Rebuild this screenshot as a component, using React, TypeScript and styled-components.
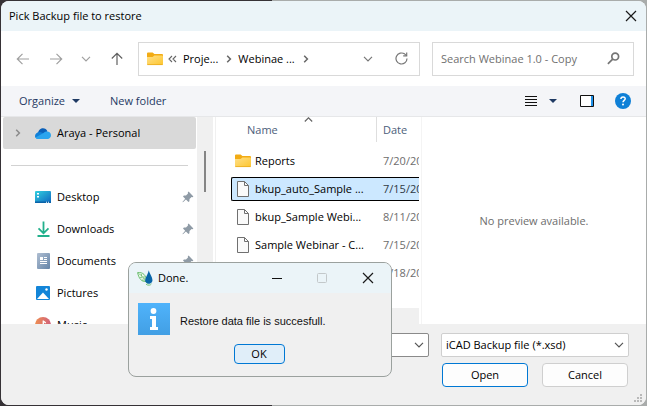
import React, { useState } from "react";
import styled, { createGlobalStyle } from "styled-components";

const GlobalStyle = createGlobalStyle`
  *, *::before, *::after { box-sizing: border-box; }
  html, body { margin: 0; height: 100%; }
  body, button, input, select {
    font-family: "Open Sans", "Noto Sans", sans-serif;
    font-size: 11px;
    line-height: 16px;
    color: #000;
  }
  button { padding: 0; border: 0; background: none; }
  svg { display: block; flex: none; }
`;

const Desktop = styled.div`
  position: relative;
  height: 100vh;
  padding: 1px;
  overflow: hidden;
  background: linear-gradient(to right, #363236 42%, #a9acab 42%);
`;

const Window = styled.main`
  display: flex;
  flex-direction: column;
  height: 100%;
  overflow: hidden;
  border-radius: 8px;
  background: #fff;
`;

const TitleBar = styled.header`
  display: flex;
  align-items: center;
  justify-content: space-between;
  flex: none;
  height: 30px;
  padding: 0 9px 0 8px;
  background: #ebf4f8;
`;

const Title = styled.h1`
  margin: 0;
  font-size: 11px;
  font-weight: 400;
  white-space: nowrap;
`;

const IconButton = styled.button<{ $color?: string }>`
  display: grid;
  place-items: center;
  flex: none;
  color: ${(p) => p.$color ?? "#1a1a1a"};
`;

const NavBar = styled.nav`
  display: grid;
  grid-template-columns: 108px minmax(0, 308fr) minmax(0, 202fr);
  align-items: center;
  flex: none;
  height: 55px;
  padding: 0 12px 0 15px;
`;

const NavButtons = styled.div`
  display: flex;
  align-items: center;
  justify-content: space-between;
`;

const AddressBar = styled.div`
  display: flex;
  align-items: center;
  height: 34px;
  margin: 0 12px 0 14px;
  padding: 0 11px 0 8px;
  border: 1px solid #d9d9d9;
  color: #666;
`;

const Crumb = styled.button`
  margin: 0 8px 0 6px;
  white-space: nowrap;
`;

const MoreFolders = styled(IconButton)`
  margin-left: 5px;
`;

const AddressTools = styled.div`
  display: flex;
  align-items: center;
  gap: 22px;
  margin-left: auto;
`;

const SearchBox = styled.label`
  display: flex;
  align-items: center;
  height: 34px;
  padding: 0 13px 0 8px;
  border: 1px solid #d9d9d9;
`;

const SearchInput = styled.input`
  flex: 1;
  min-width: 0;
  padding: 0;
  border: 0;
  outline: 0;
  background: none;
  &::placeholder { color: #707070; opacity: 1; }
`;

const CommandBar = styled.div`
  display: flex;
  align-items: center;
  flex: none;
  height: 31px;
  padding: 0 15px 0 18px;
  border-bottom: 1px solid #e6e7e9;
  background: #f4f5f8;
`;

const CommandButton = styled.button`
  display: flex;
  align-items: center;
  gap: 7px;
  margin-right: 30px;
  color: #1f3a63;
  white-space: nowrap;
`;

const CommandTools = styled.div`
  display: flex;
  align-items: center;
  margin-left: auto;
`;

const ViewTools = styled.div`
  display: flex;
  align-items: center;
  gap: 12px;
  margin-right: 23px;
`;

const PaneTools = styled.div`
  display: flex;
  align-items: center;
  gap: 21px;
`;

const Body = styled.div`
  display: grid;
  grid-template-columns: 212px 208px minmax(0, 1fr);
  grid-template-rows: minmax(0, 1fr);
  flex: 1;
  min-height: 0;
`;

const Sidebar = styled.aside`
  display: flex;
  overflow: hidden;
`;

const Tree = styled.div`
  flex: 1;
  min-width: 0;
  padding: 0 1px 0 2px;
`;

const TreeItem = styled.button<{ $selected?: boolean }>`
  display: grid;
  grid-template-columns: 24px 16px 1fr 12px;
  column-gap: 6px;
  align-items: center;
  justify-items: start;
  width: 100%;
  height: 32px;
  padding: 0 2px;
  border-radius: 2px;
  background: ${(p) => (p.$selected ? "#d9d9d9" : "transparent")};
`;

const TreeChevron = styled.span`
  display: grid;
  width: 24px;
  padding-left: 10px;
  color: #8a8a8a;
`;

const IconSlot = styled.span`
  display: grid;
  place-items: center;
  width: 16px;
`;

const TreeDivider = styled.hr`
  height: 1px;
  margin: 16px 8px 15px;
  border: 0;
  background: #d2d2d2;
`;

const ScrollTrack = styled.div`
  flex: none;
  width: 16px;
  padding: 34px 7px 0;
  background: #f0f0f0;
`;

const ScrollThumb = styled.div`
  width: 2px;
  height: 41px;
  background: #858585;
`;

const FilePane = styled.section`
  display: flex;
  flex-direction: column;
  min-width: 0;
  margin-left: 2px;
  border-left: 1px solid #f0f0f0;
`;

const FileTableClip = styled.div`
  flex: 1;
  min-height: 0;
  margin-right: 2px;
  overflow: hidden;
`;

const FileTable = styled.table`
  width: 100%;
  table-layout: fixed;
  border-spacing: 0;
`;

const HeadCell = styled.th<{ $width?: number }>`
  position: relative;
  width: ${(p) => (p.$width ? `${p.$width}px` : "auto")};
  height: 25px;
  padding: ${(p) => (p.$width ? "0 0 0 31px" : "0 0 0 6px")};
  border-right: ${(p) => (p.$width ? "1px solid #dedede" : "0")};
  color: #4c607a;
  font-weight: 400;
  text-align: left;
`;

const SortMark = styled.span`
  position: absolute;
  top: 0;
  left: 88px;
  color: #666;
`;

const HeadSpacer = styled.tr`
  height: 5px;
`;

const Row = styled.tr`
  height: 28px;
`;

const Cell = styled.td`
  padding: 2px 0;
`;

const FileName = styled.div<{ $selected?: boolean }>`
  display: grid;
  grid-template-columns: 16px minmax(0, 1fr);
  column-gap: 4px;
  align-items: center;
  justify-items: center;
  height: 24px;
  margin-left: 15px;
  padding-left: ${(p) => (p.$selected ? 3 : 4)}px;
  border: solid ${(p) => (p.$selected ? "#000" : "transparent")};
  border-width: ${(p) => (p.$selected ? "1px 0 1px 1px" : "0")};
  border-radius: 2px 0 0 2px;
  background: ${(p) => (p.$selected ? "#cce8ff" : "transparent")};
`;

const FileLabel = styled.span`
  width: 100%;
  overflow: hidden;
  white-space: nowrap;
`;

const FileDate = styled.div<{ $selected?: boolean }>`
  display: flex;
  align-items: center;
  height: 24px;
  padding-left: 6px;
  overflow: hidden;
  border: solid ${(p) => (p.$selected ? "#000" : "transparent")};
  border-width: 1px 0;
  background: ${(p) => (p.$selected ? "#cce8ff" : "transparent")};
  color: ${(p) => (p.$selected ? "#303a44" : "#6d6d6d")};
  white-space: nowrap;
`;

const HorizontalTrack = styled.div`
  flex: none;
  height: 16px;
  margin-right: 2px;
  background: #f0f0f0;
`;

const Preview = styled.section`
  display: grid;
  place-items: center;
  border-left: 1px solid #f4f4f4;
  color: #6d6d6d;
`;

const Footer = styled.footer`
  display: flex;
  flex-direction: column;
  align-items: flex-end;
  flex: none;
  gap: 6px;
  padding: 9px 17px 18px;
  background: #f0f0f0;
`;

const FieldRow = styled.div`
  display: flex;
  gap: 12px;
  width: 100%;
  padding-left: 110px;
`;

const Field = styled.div`
  display: grid;
  grid-template-columns: minmax(0, 1fr) 10px;
  align-items: center;
  height: 24px;
  padding-right: 4px;
  border: 1px solid #8a8a8a;
  border-radius: 2px;
  background: #fff;
  color: #555;
`;

const NameField = styled(Field)`
  flex: 1;
`;

const TypeField = styled(Field)`
  width: 188px;
  border-color: #cfcfcf;
`;

const NameInput = styled.input`
  min-width: 0;
  padding: 0 4px;
  border: 0;
  outline: 0;
  background: none;
`;

const TypeSelect = styled.select`
  grid-area: 1 / 1 / 2 / 3;
  width: 100%;
  height: 22px;
  padding: 0 14px 0 4px;
  border: 0;
  outline: 0;
  appearance: none;
  background: none;
`;

const TypeChevron = styled.span`
  grid-area: 1 / 2;
  pointer-events: none;
`;

const Actions = styled.div`
  display: flex;
  gap: 14px;
  padding-right: 1px;
`;

const PushButton = styled.button<{ $primary?: boolean; $small?: boolean }>`
  width: ${(p) => (p.$small ? 51 : 86)}px;
  height: ${(p) => (p.$small ? 20 : 24)}px;
  border: 1px solid ${(p) => (p.$primary ? "#0078d4" : "#cfcfcf")};
  border-radius: 4px;
  background: ${(p) => (p.$small ? "#e0eef9" : "#fdfdfd")};
`;

const Grip = styled.div`
  position: absolute;
  right: 4px;
  bottom: 3px;
`;

const Dialog = styled.section`
  position: absolute;
  left: 128px;
  top: 262px;
  width: 264px;
  overflow: hidden;
  border: 1px solid #9ba19e;
  border-radius: 8px;
  background: #f0f0f0;
`;

const DialogTitleBar = styled.header`
  display: flex;
  align-items: center;
  gap: 5px;
  height: 30px;
  padding: 0 17px 0 8px;
  background: #ebf4f8;
`;

const DialogTools = styled.div`
  display: flex;
  align-items: center;
  gap: 35px;
  margin-left: auto;
`;

const DialogMessage = styled.div`
  display: flex;
  align-items: center;
  gap: 10px;
  padding: 10px 9px 0;
`;

const MessageText = styled.p`
  margin: 0;
  padding-top: 4px;
  font: 11px/16px "Liberation Sans", Arial, sans-serif;
  color: #111;
`;

const DialogActions = styled.div`
  display: flex;
  justify-content: center;
  padding: 9px 2px 12px 0;
`;

const Arrow = ({ turn = 0 }: { turn?: number }) => (
  <svg width="14" height="14" viewBox="0 0 14 14" fill="none" stroke="currentColor" strokeWidth="1.2">
    <g transform={`rotate(${turn} 7 7)`}>
      <path d="M13 7H1.5M6.500 1.800 1.300 7l5.200 5.200" />
    </g>
  </svg>
);

const ChevronDown = () => (
  <svg width="10" height="6" viewBox="0 0 10 6" fill="none" stroke="currentColor" strokeWidth="1.2">
    <path d="m1 .8 4 4 4-4" />
  </svg>
);

const ChevronRight = ({ height = 8 }: { height?: number }) => (
  <svg width="6" height={height} viewBox="0 0 6 8" fill="none" stroke="currentColor" strokeWidth="1.5">
    <path d="m1.200.8 3.200 3.200-3.200 3.200" />
  </svg>
);

const Laquo = () => (
  <svg width="9" height="8" viewBox="0 0 9 8" fill="none" stroke="currentColor" strokeWidth="1.1">
    <path d="M4 1 1 4l3 3M8 1 5 4l3 3" />
  </svg>
);

const Cross = () => (
  <svg width="12" height="12" viewBox="0 0 12 12" fill="none" stroke="currentColor" strokeWidth="1.2">
    <path d="m1 1 10 10M11 1 1 11" />
  </svg>
);

const Caret = () => (
  <svg width="8" height="4" viewBox="0 0 8 4" fill="#1f3a63">
    <path d="M0 0h8L4 4z" />
  </svg>
);

const SortIcon = () => (
  <svg width="9" height="5" viewBox="0 0 9 5" fill="none" stroke="currentColor" strokeWidth="1.2">
    <path d="M.8 4.500 4.500.8l3.700 3.700" />
  </svg>
);

const FolderIcon = () => (
  <svg width="16" height="14" viewBox="0 0 16 14">
    <defs>
      <linearGradient id="folder" x1="0" y1="0" x2="1" y2="1">
        <stop offset="0" stopColor="#ffe08a" />
        <stop offset="1" stopColor="#fdc62f" />
      </linearGradient>
    </defs>
    <path d="M0 1.500Q0 .5 1 .5h4.600L7.400 2H15q1 0 1 1v7H0z" fill="#f2ab14" />
    <path d="M0 5h5.600l1.800-1.600H15q1 0 1 1V12q0 1-1 1H1q-1 0-1-1z" fill="url(#folder)" />
    <path d="M.3 12.600h15.400" stroke="#e9a91a" strokeWidth=".8" />
  </svg>
);

const PageIcon = () => (
  <svg width="12" height="16" viewBox="0 0 12 16" fill="#fafafa" stroke="#707070">
    <path d="M.5.5h7l4 4v11H.5z" />
    <path d="M7.500.5v4h4" fill="none" />
  </svg>
);

const RefreshIcon = () => (
  <svg width="13" height="13" viewBox="0 0 13 13" fill="none" stroke="#777" strokeWidth="1.2">
    <path d="M12 6.500A5.500 5.500 0 1 1 9.800 2.100L11.600 3.600" />
    <path d="M11.700.4v3.400H8.200" />
  </svg>
);

const SearchIcon = () => (
  <svg width="13" height="13" viewBox="0 0 13 13" fill="none" stroke="#757575" strokeWidth="1.7">
    <circle cx="8.2" cy="4.6" r="3.4" />
    <path d="M5.700 7.100.9 11.900" />
  </svg>
);

const ListIcon = () => (
  <svg width="12" height="11" viewBox="0 0 12 11" fill="#111">
    <path d="M0 0h12v1H0zM0 3h12v1H0zM0 6h12v1H0zM0 9h12v1H0z" />
  </svg>
);

const PaneIcon = () => (
  <svg width="14" height="12" viewBox="0 0 14 12">
    <path d="M.5.5h13v11H.5z" fill="#fff" stroke="#111" />
    <path d="M11 1h2v10h-2z" fill="#1e90e8" />
  </svg>
);

const HelpIcon = () => (
  <svg width="16" height="16" viewBox="0 0 16 16">
    <circle cx="8" cy="8" r="8" fill="#0f80d7" />
    <path d="M5.900 6.100C5.900 3.200 10.200 3.300 10.200 5.800 10.200 7.400 8 7.400 8 9.300" fill="none" stroke="#fff" strokeWidth="1.5" />
    <circle cx="8" cy="11.6" r="1" fill="#fff" />
  </svg>
);

const PinIcon = () => (
  <svg width="12" height="12" viewBox="0 0 12 12" fill="#8f9ba6">
    <path d="M6.600.6 11.400 5.400 10.600 6.200 9.600 6 7.500 8.100 7.400 10.200 6.500 11 3.900 8.400 1 11.300.4 10.900 3.200 7.700 1 5.500 1.900 4.600 4 4.500 6 2.400 5.800 1.400z" />
  </svg>
);

const CloudIcon = () => (
  <svg width="16" height="11" viewBox="0 0 16 11">
    <path d="M3 7C2.600 2.700 5.200.3 8 .3c2 0 3.700 1.200 4.400 3L9 8z" fill="#0a5fb8" />
    <path d="M5 4c-3 0-5 1.700-5 4 0 1.300.8 2.400 2 2.800L11 6z" fill="#1280d8" />
    <path d="M12 3.600c2.300 0 4 1.700 4 3.700S14.500 11 12.500 11H3.200C1.800 11 .8 10.300.4 9.500L8.200 5.200c1-1 2.300-1.600 3.800-1.600z" fill="#2aa4ee" />
  </svg>
);

const DesktopIcon = () => (
  <svg width="16" height="12" viewBox="0 0 16 12">
    <defs>
      <linearGradient id="desk" x1="0" y1="0" x2="1" y2="1">
        <stop offset="0" stopColor="#31d0df" />
        <stop offset="1" stopColor="#0e65c0" />
      </linearGradient>
    </defs>
    <rect width="16" height="12" rx="1" fill="url(#desk)" />
    <path d="M2 2h2v1.500H2zM2 5h2v1.500H2z" fill="#fff" />
    <path d="M0 10.500h16V12H0z" fill="#0a63a8" />
    <path d="M11 10.700h1v1h-1zM13 10.700h1v1h-1z" fill="#fff" />
  </svg>
);

const DownloadIcon = () => (
  <svg width="13" height="16" viewBox="0 0 13 16" fill="none" stroke="#22b08c" strokeWidth="1.8">
    <path d="M6.500.5v11.500M1.500 7.300l5 5 5-5M.5 15h12" />
  </svg>
);

const DocumentIcon = () => (
  <svg width="13" height="16" viewBox="0 0 13 16">
    <defs>
      <linearGradient id="doc" x1="0" y1="0" x2="1" y2="1">
        <stop offset="0" stopColor="#b0bfd2" />
        <stop offset="1" stopColor="#6484a8" />
      </linearGradient>
    </defs>
    <rect width="13" height="16" rx="1" fill="url(#doc)" />
    <path d="M3 4h3v3H3zM7 4h3v1H7zM7 6h3v1H7zM3 8h7v1H3zM3 10h7v1H3z" fill="#fff" />
  </svg>
);

const PicturesIcon = () => (
  <svg width="14" height="14" viewBox="0 0 14 14">
    <rect width="14" height="14" rx="1" fill="#1385d8" />
    <path d="m1 13 6-6.500 6 6.500z" fill="#fff" />
    <circle cx="10.5" cy="3.5" r="1.2" fill="#fff" />
  </svg>
);

const MusicIcon = () => (
  <svg width="16" height="16" viewBox="0 0 16 16">
    <defs>
      <linearGradient id="music" x1="0" y1="0" x2="1" y2="0">
        <stop offset="0" stopColor="#ee8f52" />
        <stop offset="1" stopColor="#d0607c" />
      </linearGradient>
    </defs>
    <circle cx="8" cy="8" r="8" fill="url(#music)" />
    <path d="M8.300 3.500v7M8.300 4l2.500 2" stroke="#fff" strokeWidth="1.4" fill="none" />
    <circle cx="7" cy="10.5" r="1.8" fill="#fff" />
  </svg>
);

const LeafIcon = () => (
  <svg width="16" height="16" viewBox="0 0 16 16">
    <path d="M.6 2.600C6 2 9.200 5 9.500 11.500 4.600 12 2 9 .6 2.600z" fill="#eef8ee" stroke="#5cb860" strokeWidth=".9" />
    <path d="M1.500 3.500C5 5.500 7.500 8.500 9 12l2 2.300M4.500 4v2.500M7 6v3M3 7.500l2.500.2M5 10l2.800.2" fill="none" stroke="#5cb860" strokeWidth=".7" />
    <path d="M11.700.2c.8 3.600 3.800 6.500 3.800 10a3.800 3.800 0 0 1-7.200 1.400C7.500 8 11.200 4.500 11.700.2z" fill="#0865a8" />
    <path d="M9 14.200c2 1.600 4.500 1.200 5.500-.4" fill="none" stroke="#5cb860" strokeWidth=".8" />
  </svg>
);

const InfoIcon = () => (
  <svg width="32" height="32" viewBox="0 0 32 32">
    <defs>
      <linearGradient id="info" x1="0" y1="0" x2="0" y2="1">
        <stop offset="0" stopColor="#4fb3fb" />
        <stop offset="1" stopColor="#429fe4" />
      </linearGradient>
    </defs>
    <rect width="32" height="32" fill="url(#info)" />
    <circle cx="15.5" cy="8" r="2.9" fill="#fff" />
    <path d="M12 13h6v11h2v3h-8v-3h2v-8h-2z" fill="#fff" />
  </svg>
);

const MinimizeIcon = () => (
  <svg width="10" height="10" viewBox="0 0 10 10">
    <path d="M0 5h10v1H0z" fill="#111" />
  </svg>
);

const MaximizeIcon = () => (
  <svg width="10" height="10" viewBox="0 0 10 10">
    <rect x=".5" y=".5" width="9" height="9" rx="1" fill="none" stroke="#c3c8ca" />
  </svg>
);

const places = [
  { name: "Desktop", icon: <DesktopIcon /> },
  { name: "Downloads", icon: <DownloadIcon /> },
  { name: "Documents", icon: <DocumentIcon /> },
  { name: "Pictures", icon: <PicturesIcon /> },
  { name: "Music", icon: <MusicIcon /> },
];

const files = [
  { name: "Reports", date: "7/20/20", folder: true },
  { name: "bkup_auto_Sample ...", date: "7/15/20" },
  { name: "bkup_Sample Webi...", date: "8/11/20" },
  { name: "Sample Webinar - C...", date: "7/15/20" },
  { name: "Sample", date: "7/18/20" },
];

export default function App() {
  const [selected, setSelected] = useState(1);
  return (
    <>
      <GlobalStyle />
      <Desktop>
        <Window>
          <TitleBar>
            <Title>Pick Backup file to restore</Title>
            <IconButton aria-label="Close"><Cross /></IconButton>
          </TitleBar>
          <NavBar>
            <NavButtons>
              <IconButton aria-label="Back" $color="#a0a0a0"><Arrow /></IconButton>
              <IconButton aria-label="Forward" $color="#a0a0a0"><Arrow turn={180} /></IconButton>
              <IconButton aria-label="Recent locations" $color="#a0a0a0"><ChevronDown /></IconButton>
              <IconButton aria-label="Up" $color="#606060"><Arrow turn={90} /></IconButton>
            </NavButtons>
            <AddressBar>
              <FolderIcon />
              <MoreFolders aria-label="More folders" $color="#666"><Laquo /></MoreFolders>
              <Crumb>Proje...</Crumb>
              <ChevronRight />
              <Crumb>Webinae ...</Crumb>
              <ChevronRight />
              <AddressTools>
                <IconButton aria-label="Previous locations" $color="#777"><ChevronDown /></IconButton>
                <IconButton aria-label="Refresh"><RefreshIcon /></IconButton>
              </AddressTools>
            </AddressBar>
            <SearchBox>
              <SearchInput aria-label="Search" placeholder="Search Webinae 1.0 - Copy" />
              <SearchIcon />
            </SearchBox>
          </NavBar>
          <CommandBar>
            <CommandButton>Organize <Caret /></CommandButton>
            <CommandButton>New folder</CommandButton>
            <CommandTools>
              <ViewTools>
                <IconButton aria-label="Change view"><ListIcon /></IconButton>
                <IconButton aria-label="More views"><Caret /></IconButton>
              </ViewTools>
              <PaneTools>
                <IconButton aria-label="Preview pane"><PaneIcon /></IconButton>
                <IconButton aria-label="Help"><HelpIcon /></IconButton>
              </PaneTools>
            </CommandTools>
          </CommandBar>
          <Body>
            <Sidebar>
              <Tree>
                <TreeItem $selected>
                  <TreeChevron><ChevronRight height={10} /></TreeChevron>
                  <CloudIcon />
                  Araya - Personal
                </TreeItem>
                <TreeDivider />
                {places.map((place) => (
                  <TreeItem key={place.name}>
                    <TreeChevron />
                    <IconSlot>{place.icon}</IconSlot>
                    {place.name}
                    <PinIcon />
                  </TreeItem>
                ))}
              </Tree>
              <ScrollTrack><ScrollThumb /></ScrollTrack>
            </Sidebar>
            <FilePane>
              <FileTableClip>
                <FileTable>
                  <thead>
                    <tr>
                      <HeadCell $width={161}>Name<SortMark><SortIcon /></SortMark></HeadCell>
                      <HeadCell>Date</HeadCell>
                    </tr>
                  </thead>
                  <tbody>
                    <HeadSpacer />
                    {files.map((file, i) => (
                      <Row key={file.name} onClick={() => setSelected(i)}>
                        <Cell>
                          <FileName $selected={i === selected}>
                            {file.folder ? <FolderIcon /> : <PageIcon />}
                            <FileLabel>{file.name}</FileLabel>
                          </FileName>
                        </Cell>
                        <Cell>
                          <FileDate $selected={i === selected}>{file.date}</FileDate>
                        </Cell>
                      </Row>
                    ))}
                  </tbody>
                </FileTable>
              </FileTableClip>
              <HorizontalTrack />
            </FilePane>
            <Preview>No preview available.</Preview>
          </Body>
          <Footer>
            <FieldRow>
              <NameField>
                <NameInput aria-label="File name" />
                <ChevronDown />
              </NameField>
              <TypeField>
                <TypeSelect aria-label="File type">
                  <option>iCAD Backup file (*.xsd)</option>
                </TypeSelect>
                <TypeChevron><ChevronDown /></TypeChevron>
              </TypeField>
            </FieldRow>
            <Actions>
              <PushButton $primary>Open</PushButton>
              <PushButton>Cancel</PushButton>
            </Actions>
          </Footer>
        </Window>
        <Grip>
          <svg width="9" height="9" viewBox="0 0 9 9" fill="#b9b9b9">
            <path d="M6 0h2v2H6zM3 3h2v2H3zM6 3h2v2H6zM0 6h2v2H0zM3 6h2v2H3zM6 6h2v2H6z" />
          </svg>
        </Grip>
        <Dialog role="dialog" aria-label="Done.">
          <DialogTitleBar>
            <LeafIcon />
            <Title as="h2">Done.</Title>
            <DialogTools>
              <IconButton aria-label="Minimize"><MinimizeIcon /></IconButton>
              <IconButton aria-label="Maximize" disabled><MaximizeIcon /></IconButton>
              <IconButton aria-label="Close message"><Cross /></IconButton>
            </DialogTools>
          </DialogTitleBar>
          <DialogMessage>
            <InfoIcon />
            <MessageText>Restore data file is succesfull.</MessageText>
          </DialogMessage>
          <DialogActions>
            <PushButton $primary $small>OK</PushButton>
          </DialogActions>
        </Dialog>
      </Desktop>
    </>
  );
}
